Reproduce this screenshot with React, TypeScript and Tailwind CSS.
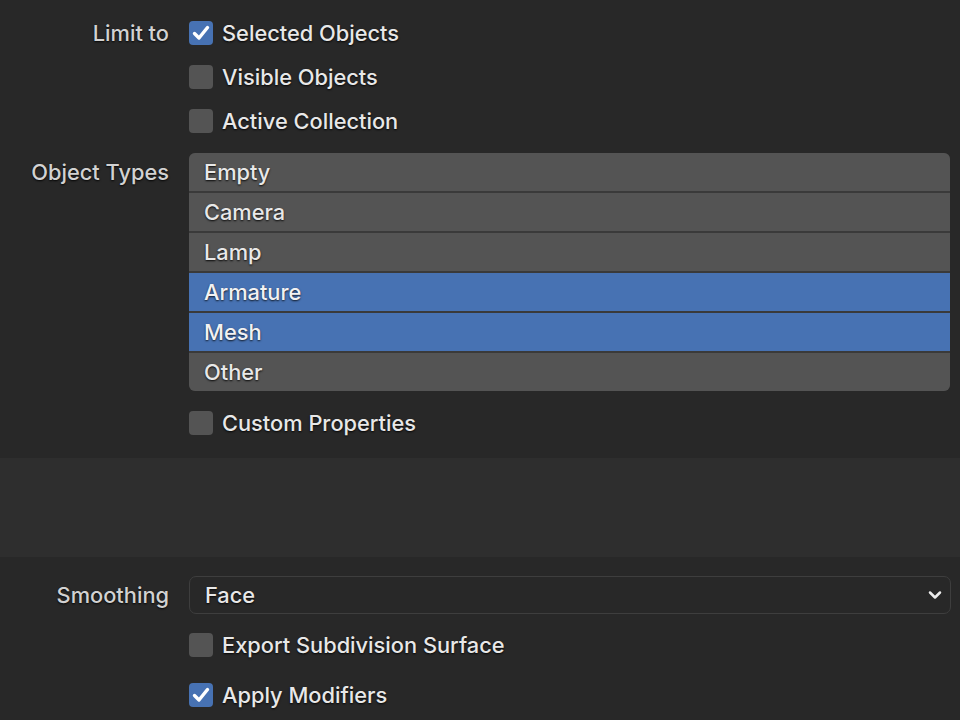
import { ChevronDown } from "lucide-react"

const font = { fontFamily: "Inter, 'Noto Sans', sans-serif" }

function Check({ on, label }: { on?: boolean; label: string }) {
  return (
    <div className="flex items-center gap-[9px]">
      <div
        className={
          on
            ? "flex h-[24px] w-[24px] items-center justify-center rounded-[4px] bg-[#4772b3]"
            : "h-[24px] w-[24px] rounded-[4px] bg-[#545454]"
        }
      >
        {on && (
          <svg viewBox="0 0 24 24" className="h-[24px] w-[24px]" fill="none">
            <path
              d="M5.5 12.5l4.5 4.5L18.5 6.5"
              stroke="#ffffff"
              strokeWidth="3.4"
              strokeLinecap="round"
              strokeLinejoin="round"
            />
          </svg>
        )}
      </div>
      <span className="text-[#e8e8e8] [text-shadow:0_1px_2px_rgba(0,0,0,0.9)]">{label}</span>
    </div>
  )
}

function Row({
  label,
  h,
  children,
}: {
  label?: string
  h: string
  children: React.ReactNode
}) {
  return (
    <div className={`flex items-center ${h}`}>
      <div className="w-[169px] shrink-0 text-right text-[#d2d2d2] [text-shadow:0_1px_2px_rgba(0,0,0,0.9)]">
        {label}
      </div>
      <div className="ml-[20px] flex-1">{children}</div>
    </div>
  )
}

const types = [
  { name: "Empty", on: false },
  { name: "Camera", on: false },
  { name: "Lamp", on: false },
  { name: "Armature", on: true },
  { name: "Mesh", on: true },
  { name: "Other", on: false },
]

export default function App() {
  return (
    <div
      className="h-[720px] w-[960px] overflow-hidden bg-[#282828] text-[21.8px] font-medium leading-[1.4]"
      style={font}
    >
      <section className="bg-[#282828] pb-[13px] pr-[10px] pt-[11px]">
        <Row label="Limit to" h="h-[44px]">
          <Check on label="Selected Objects" />
        </Row>
        <Row h="h-[44px]">
          <Check label="Visible Objects" />
        </Row>
        <Row h="h-[44px]">
          <Check label="Active Collection" />
        </Row>

        <div className="mt-[10px] flex">
          <div className="flex h-[38px] w-[169px] shrink-0 items-center justify-end text-[#d2d2d2] [text-shadow:0_1px_2px_rgba(0,0,0,0.9)]">
            Object Types
          </div>
          <div className="ml-[20px] flex flex-1 flex-col gap-[2px] overflow-hidden rounded-[6px] bg-[#3a3a3a]">
            {types.map((t) => (
              <div
                key={t.name}
                className={
                  t.on
                    ? "flex h-[38px] items-center bg-[#4772b3] pl-[15px] text-[#f2f2f2] [text-shadow:0_1px_2px_rgba(0,0,0,0.8)]"
                    : "flex h-[38px] items-center bg-[#545454] pl-[15px] text-[#e8e8e8] [text-shadow:0_1px_2px_rgba(0,0,0,0.9)]"
                }
              >
                {t.name}
              </div>
            ))}
          </div>
        </div>

        <div className="mt-[10px]">
          <Row h="h-[44px]">
            <Check label="Custom Properties" />
          </Row>
        </div>
      </section>

      <div className="h-[99px] bg-[#2e2e2e]" />

      <section className="bg-[#282828] pr-[9px] pt-[19px]">
        <Row label="Smoothing" h="h-[38px]">
          <div className="flex h-[38px] items-center justify-between rounded-[7px] border border-[#3e3e3e] bg-[#282828] pl-[15px] pr-[5px]">
            <span className="text-[#e8e8e8] [text-shadow:0_1px_2px_rgba(0,0,0,0.9)]">Face</span>
            <ChevronDown className="h-[20px] w-[20px] text-[#ececec]" strokeWidth={3} />
          </div>
        </Row>
        <div className="mt-[6px]">
          <Row h="h-[50px]">
            <Check label="Export Subdivision Surface" />
          </Row>
          <Row h="h-[50px]">
            <Check on label="Apply Modifiers" />
          </Row>
        </div>
      </section>
    </div>
  )
}
